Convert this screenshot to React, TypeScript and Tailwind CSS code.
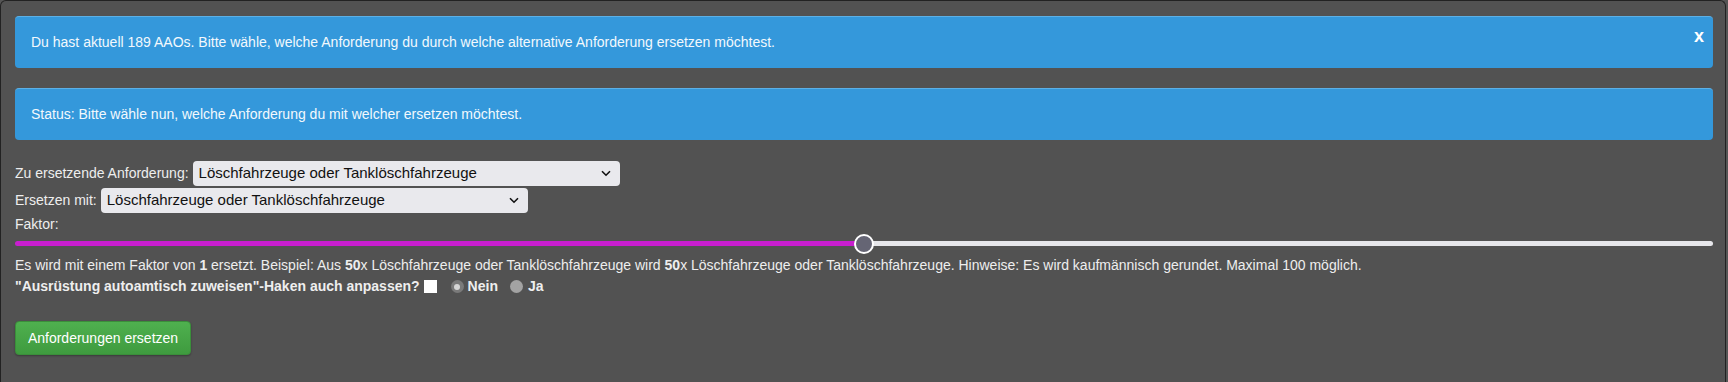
import React from "react";

function Alert({ children, close }: { children: React.ReactNode; close?: boolean }) {
  return (
    <div className="relative mb-[20px] flex h-[52px] items-center rounded-[4px] border-t border-t-[#5cb0e6] bg-[#3498db] pl-[16px] text-[14px] text-[#f2f8fd]">
      <span>{children}</span>
      {close && (
        <span className="absolute right-[9px] top-[10px] text-[18px] font-bold leading-none text-white">x</span>
      )}
    </div>
  );
}

function Select({ w }: { w: string }) {
  return (
    <div className={`relative ml-[4px] flex h-[25px] items-center rounded-[4px] bg-[#e9e9ed] pl-[6px] text-[15px] text-[#111] ${w}`}>
      <span>Löschfahrzeuge oder Tanklöschfahrzeuge</span>
      <svg className="absolute right-[9px] top-[9px]" width="10" height="7" viewBox="0 0 10 7">
        <path d="M1 1.2 L5 5.2 L9 1.2" fill="none" stroke="#111" strokeWidth="1.6" />
      </svg>
    </div>
  );
}

export default function App() {
  return (
    <div className="h-[382px] w-[1728px] bg-[#555] font-['Liberation_Sans',Arial,sans-serif]">
      <div className="h-[382px] w-[1726px] rounded-t-[6px] border-l border-r border-t border-[#222] bg-[#525252] pl-[14px] pr-[12px] pt-[15px] text-[14px] text-[#eee]">
        <Alert close>
          Du hast aktuell 189 AAOs. Bitte wähle, welche Anforderung du durch welche alternative Anforderung ersetzen möchtest.
        </Alert>
        <Alert>Status: Bitte wähle nun, welche Anforderung du mit welcher ersetzen möchtest.</Alert>

        <div className="flex h-[27px] items-center">
          <span>Zu ersetzende Anforderung:</span>
          <Select w="w-[427px]" />
        </div>
        <div className="flex h-[27px] items-center">
          <span>Ersetzen mit:</span>
          <Select w="w-[427px]" />
        </div>
        <div className="h-[20px] leading-[20px]">Faktor:</div>
        <div className="relative flex h-[19px] items-center">
          <div className="h-[5px] w-[849px] rounded-l-full bg-[#c81ecf]" />
          <div className="h-[5px] flex-1 rounded-r-full bg-[#e6e6ea]" />
          <div className="absolute left-[839px] top-0 h-[20px] w-[20px] rounded-full border-[2px] border-white bg-[#656574]" />
        </div>
        <div className="mt-[2px] h-[20px] leading-[20px]">
          Es wird mit einem Faktor von <b>1</b> ersetzt. Beispiel: Aus <b>50</b>x Löschfahrzeuge oder Tanklöschfahrzeuge wird{" "}
          <b>50</b>x Löschfahrzeuge oder Tanklöschfahrzeuge. Hinweise: Es wird kaufmännisch gerundet. Maximal 100 möglich.
        </div>
        <div className="mt-[1px] flex h-[21px] items-center font-bold">
          <span>"Ausrüstung autoamtisch zuweisen"-Haken auch anpassen?</span>
          <span className="ml-[4px] inline-block h-[13px] w-[13px] bg-white" />
          <span className="ml-[14px] flex h-[13px] w-[13px] items-center justify-center rounded-full bg-[#7a7a7a]">
            <span className="h-[6px] w-[6px] rounded-full bg-[#d6d6d6]" />
          </span>
          <span className="ml-[4px]">Nein</span>
          <span className="ml-[12px] inline-block h-[13px] w-[13px] rounded-full bg-[#a3a3a3]" />
          <span className="ml-[5px]">Ja</span>
        </div>
        <button className="mt-[24px] h-[34px] w-[176px] rounded-[4px] border border-[#3a8f3a] bg-gradient-to-b from-[#4fb04f] to-[#3f9b3f] text-[14px] text-white shadow-[0_1px_2px_rgba(0,0,0,0.3)]">
          Anforderungen ersetzen
        </button>
      </div>
    </div>
  );
}
